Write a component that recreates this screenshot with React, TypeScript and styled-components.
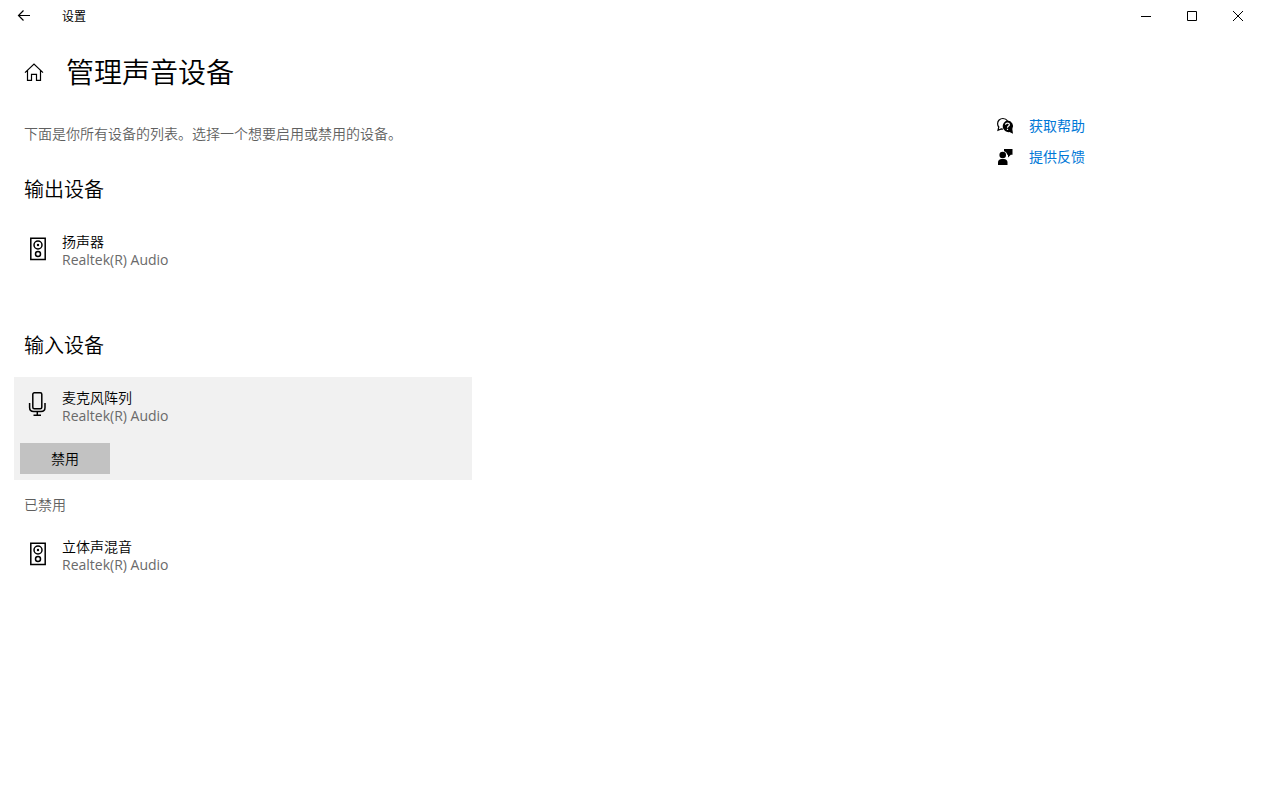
import React from "react";
import styled, { createGlobalStyle } from "styled-components";

const GlobalStyle = createGlobalStyle`
  *, *::before, *::after { box-sizing: border-box; }
  body {
    margin: 0;
    background: #fff;
    color: #000;
    font-family: "Open Sans", "Noto Sans CJK SC", sans-serif;
    font-size: 14px;
    font-weight: 350;
    line-height: 20px;
  }
  h1, h2, p, ul { margin: 0; padding: 0; font-weight: inherit; }
  svg { display: block; flex: none; overflow: visible; }
`;

const TitleBar = styled.header`
  display: flex;
  height: 32px;
  font-size: 12px;
  font-weight: 400;
`;

const BarButton = styled.button`
  display: grid;
  place-items: center;
  width: ${(p: { $wide?: boolean }) => (p.$wide ? 48 : 46)}px;
  height: 32px;
  padding: 0;
  border: 0;
  background: transparent;
  color: #000;
`;

const WindowTitle = styled.span`
  flex: 1;
  padding-left: 14px;
  line-height: 34px;
`;

const PageHeader = styled.div`
  display: flex;
  align-items: center;
  gap: 22px;
  height: 80px;
  padding-left: 24px;
`;

const HomeLink = styled.a`
  color: #000;
`;

const PageTitle = styled.h1`
  font-size: 28px;
  line-height: 40px;
`;

const Columns = styled.div`
  display: grid;
  grid-template-columns: minmax(0, 1fr) 264px;
`;

const Main = styled.main`
  max-width: 472px;
  padding: 12px 0 32px 14px;
`;

const Note = styled.p`
  padding-left: 10px;
  color: #5f5f5f;
`;

const Section = styled.section`
  margin-top: ${(p: { $gap: number }) => p.$gap}px;
`;

const SectionTitle = styled.h2`
  margin-bottom: 17px;
  padding-left: 10px;
  font-size: 20px;
  line-height: 28px;
`;

const DeviceList = styled.ul`
  list-style: none;
`;

const DeviceItem = styled.li`
  background: ${(p: { $selected?: boolean }) => (p.$selected ? "#f1f1f1" : "transparent")};
  padding-bottom: ${(p) => (p.$selected ? 6 : 0)}px;
`;

const DeviceRow = styled.button`
  display: flex;
  align-items: center;
  gap: 12px;
  width: 100%;
  height: 60px;
  padding: 0 12px;
  border: 0;
  background: transparent;
  font: inherit;
  text-align: left;
  svg { margin-bottom: 4px; }
`;

const DeviceText = styled.span`
  display: grid;
  line-height: 18px;
`;

const DeviceName = styled.span`
  color: #000;
`;

const DeviceDriver = styled.span`
  color: #6a6a6a;
  font-weight: 400;
`;

const ActionButton = styled.button`
  display: block;
  width: 90px;
  height: 31px;
  margin: 6px 0 0 6px;
  padding: 0;
  border: 0;
  background: #c2c2c2;
  color: #000;
  font: inherit;
`;

const GroupLabel = styled.p`
  margin: 15px 0 11px;
  padding-left: 10px;
  color: #5f5f5f;
`;

const Aside = styled.aside`
  display: flex;
  flex-direction: column;
  align-items: flex-start;
  gap: 11px;
  padding-top: 4px;
`;

const HelpLink = styled.a`
  display: flex;
  align-items: center;
  gap: 16px;
  color: #0078d7;
  font-weight: 400;
  text-decoration: none;
  svg { color: #000; }
`;

const BackIcon = () => (
  <svg width="14" height="12" viewBox="0 0 14 12" fill="none" stroke="currentColor" strokeWidth="1.2" aria-hidden="true">
    <path d="M13 5.500H1.500M6.500 .5 1.500 5.500l5 5" />
  </svg>
);

const MinimizeIcon = () => (
  <svg width="10" height="10" viewBox="0 0 10 10" fill="none" stroke="currentColor" aria-hidden="true">
    <path d="M0 5.500H10" />
  </svg>
);

const MaximizeIcon = () => (
  <svg width="10" height="10" viewBox="0 0 10 10" fill="none" stroke="currentColor" aria-hidden="true">
    <path d="M.5 .5h9v9h-9z" />
  </svg>
);

const CloseIcon = () => (
  <svg width="10" height="10" viewBox="0 0 10 10" fill="none" stroke="currentColor" aria-hidden="true">
    <path d="M0 0 10 10M10 0 0 10" />
  </svg>
);

const HomeIcon = () => (
  <svg width="20" height="20" viewBox="0 0 20 20" fill="none" stroke="currentColor" strokeWidth="1.2" aria-hidden="true">
    <path d="M1 10.600 10 2l9 8.600M3.500 8.500v9.900h4v-6h5v6h4V8.500" />
  </svg>
);

const SpeakerIcon = () => (
  <svg width="24" height="24" viewBox="0 0 24 24" fill="none" stroke="#000" strokeWidth="1.500" aria-hidden="true">
    <path d="M4.800 1.200h14.400v21.400H4.800z" />
    <circle cx="12" cy="8" r="4" />
    <circle cx="12" cy="8" r="1.200" fill="#000" stroke="none" />
    <circle cx="12" cy="17" r="2.500" />
  </svg>
);

const MicIcon = () => (
  <svg width="24" height="24" viewBox="0 0 24 24" fill="none" stroke="#000" strokeWidth="1.500" aria-hidden="true">
    <rect x="6.800" y="-.2" width="9" height="16" rx="1.500" />
    <path d="M3.600 10v4.500q0 4 4 4h7.400q4 0 4-4V10M11.300 18.500V22M7.500 22.200h7.500" />
  </svg>
);

const HelpIcon = () => (
  <svg width="16" height="16" viewBox="0 0 16 16" fill="none" aria-hidden="true">
    <path d="M10.500 2.800C9.500 1.300 7.800.5 5.900.5 2.900.5.600 2.800.600 5.700c0 1.300.4 2.400 1.200 3.300L1 12.300l3.300-1.400c.5.2 1 .3 1.600.3" stroke="#000" strokeWidth="1.200" />
    <path d="M10.500 2.600a5.600 5.600 0 0 1 4.800 8.500l.7 4.700-3.500-1.700A5.800 5.800 0 1 1 10.500 2.600z" fill="#000" />
    <path d="M8.600 6.800c0-2.300 3.800-2.200 3.800 0 0 1.300-1.900 1.300-1.900 2.900M10.500 10.700v1.400" stroke="#fff" strokeWidth="1.200" />
  </svg>
);

const FeedbackIcon = () => (
  <svg width="16" height="16" viewBox="0 0 16 16" fill="#000" aria-hidden="true">
    <path d="M7 0h8.500v5.800h-1.700L11 8.500V5.800h-.8C10 4 8.800 2.600 7 2.200z" />
    <circle cx="5.700" cy="6" r="3.300" />
    <path d="M1 16v-2.500C1 11.300 2.500 10 4.500 10H7c2 0 3.500 1.300 3.500 3.500V16z" />
  </svg>
);

type DeviceProps = {
  icon: React.ReactNode;
  name: string;
  action?: string;
};

function Device({ icon, name, action }: DeviceProps) {
  const selected = Boolean(action);
  return (
    <DeviceItem $selected={selected}>
      <DeviceRow type="button" aria-expanded={selected}>
        {icon}
        <DeviceText>
          <DeviceName>{name}</DeviceName>
          <DeviceDriver>Realtek(R) Audio</DeviceDriver>
        </DeviceText>
      </DeviceRow>
      {action && <ActionButton type="button">{action}</ActionButton>}
    </DeviceItem>
  );
}

export default function App() {
  return (
    <>
      <GlobalStyle />
      <TitleBar>
        <BarButton $wide type="button" aria-label="返回"><BackIcon /></BarButton>
        <WindowTitle>设置</WindowTitle>
        <BarButton type="button" aria-label="最小化"><MinimizeIcon /></BarButton>
        <BarButton type="button" aria-label="最大化"><MaximizeIcon /></BarButton>
        <BarButton type="button" aria-label="关闭"><CloseIcon /></BarButton>
      </TitleBar>
      <PageHeader>
        <HomeLink href="#home" aria-label="主页"><HomeIcon /></HomeLink>
        <PageTitle>管理声音设备</PageTitle>
      </PageHeader>
      <Columns>
        <Main>
          <Note>下面是你所有设备的列表。选择一个想要启用或禁用的设备。</Note>
          <Section $gap={32}>
            <SectionTitle>输出设备</SectionTitle>
            <DeviceList>
              <Device icon={<SpeakerIcon />} name="扬声器" />
            </DeviceList>
          </Section>
          <Section $gap={51}>
            <SectionTitle>输入设备</SectionTitle>
            <DeviceList>
              <Device icon={<MicIcon />} name="麦克风阵列" action="禁用" />
            </DeviceList>
            <GroupLabel>已禁用</GroupLabel>
            <DeviceList>
              <Device icon={<SpeakerIcon />} name="立体声混音" />
            </DeviceList>
          </Section>
        </Main>
        <Aside>
          <HelpLink href="#help"><HelpIcon />获取帮助</HelpLink>
          <HelpLink href="#feedback"><FeedbackIcon />提供反馈</HelpLink>
        </Aside>
      </Columns>
    </>
  );
}
